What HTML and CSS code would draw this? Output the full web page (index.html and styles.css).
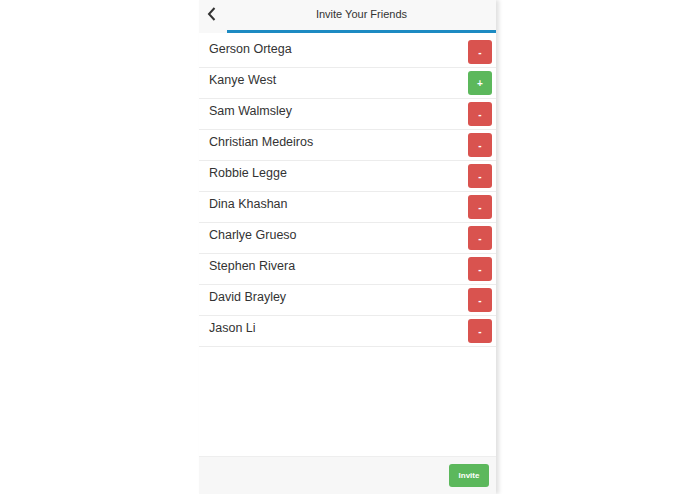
FILE: index.html
```html
<!DOCTYPE html>
<html lang="en">
<head>
    <meta charset="UTF-8">
    <title>Invite Your Friends</title>
    <link rel="stylesheet" href="styles.css">
</head>
<body>
    <div class="phone">
        <div class="header">
            <div class="back">
                <svg width="10" height="14" viewBox="0 0 10 14"><path d="M7.5 1 L2 7 L7.5 13" fill="none" stroke="#333" stroke-width="2"/></svg>
            </div>
            <div class="title-area">
                <div class="title">Invite Your Friends</div>
                <div class="progress"></div>
            </div>
        </div>
        <div class="list">
            <div class="row"><span class="name">Gerson Ortega</span><button class="btn btn-remove">-</button></div>
            <div class="row"><span class="name">Kanye West</span><button class="btn btn-add">+</button></div>
            <div class="row"><span class="name">Sam Walmsley</span><button class="btn btn-remove">-</button></div>
            <div class="row"><span class="name">Christian Medeiros</span><button class="btn btn-remove">-</button></div>
            <div class="row"><span class="name">Robbie Legge</span><button class="btn btn-remove">-</button></div>
            <div class="row"><span class="name">Dina Khashan</span><button class="btn btn-remove">-</button></div>
            <div class="row"><span class="name">Charlye Grueso</span><button class="btn btn-remove">-</button></div>
            <div class="row"><span class="name">Stephen Rivera</span><button class="btn btn-remove">-</button></div>
            <div class="row"><span class="name">David Brayley</span><button class="btn btn-remove">-</button></div>
            <div class="row"><span class="name">Jason Li</span><button class="btn btn-remove">-</button></div>
        </div>
        <div class="footer">
            <button class="invite">Invite</button>
        </div>
    </div>
</body>
</html>
```

FILE: styles.css
```css
html, body {
    height: 100%;
}
body {
    margin: 0;
    background: #fff;
    font-family: "Liberation Sans", Arial, sans-serif;
    display: flex;
    justify-content: center;
}
.phone {
    width: 297px;
    height: 494px;
    display: flex;
    flex-direction: column;
    background: #fff;
    box-shadow: 3px 0 4px rgba(0, 0, 0, 0.12);
}
.header {
    display: flex;
    height: 33px;
    background: #f8f8f8;
}
.back {
    width: 28px;
    padding: 7px 0 0 8px;
    box-sizing: border-box;
}
.title-area {
    flex: 1;
    display: flex;
    flex-direction: column;
}
.title {
    flex: 1;
    text-align: center;
    font-size: 11px;
    color: #333;
    line-height: 28px;
}
.progress {
    height: 3px;
    background: #1c8ac2;
}
.list {
    flex: 1;
    padding-top: 4px;
}
.row {
    display: flex;
    justify-content: space-between;
    align-items: flex-start;
    border-bottom: 1px solid #ececec;
    padding: 3px 4px 0 10px;
    height: 27px;
}
.name {
    font-size: 12.5px;
    line-height: 18px;
    color: #333;
}
.btn {
    width: 24px;
    height: 24px;
    border: none;
    border-radius: 3px;
    color: #fff;
    font-family: "Liberation Sans", Arial, sans-serif;
    font-size: 10px;
    font-weight: bold;
    padding: 0;
}
.btn-remove {
    background: #d9534f;
}
.btn-add {
    background: #5cb85c;
}
.footer {
    height: 38px;
    background: #f7f7f7;
    border-top: 1px solid #eee;
    display: flex;
    justify-content: flex-end;
    align-items: flex-start;
    padding: 7px 7px 0 0;
    box-sizing: border-box;
}
.invite {
    width: 40px;
    height: 23px;
    border: none;
    border-radius: 3px;
    background: #5cb85c;
    color: #fff;
    font-family: "Liberation Sans", Arial, sans-serif;
    font-size: 8px;
    font-weight: bold;
    padding: 0;
}
```
